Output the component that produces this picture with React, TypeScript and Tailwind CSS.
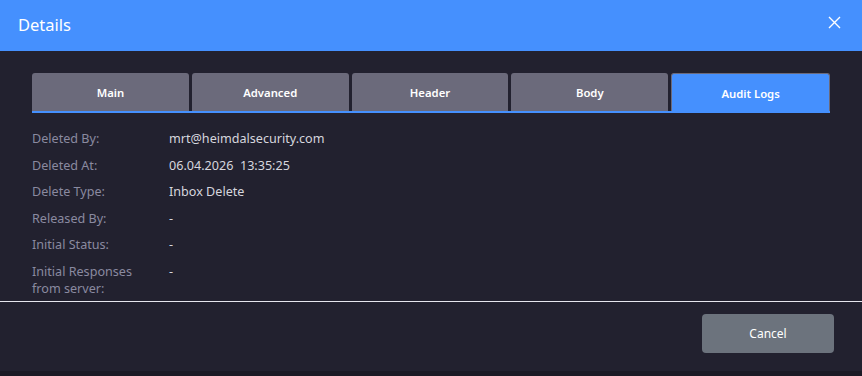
import React from "react";

const tabs = ["Main", "Advanced", "Header", "Body", "Audit Logs"];
const rows: [string, string][] = [
  ["Deleted By:", "mrt@heimdalsecurity.com"],
  ["Deleted At:", "06.04.2026\u00a0\u00a013:35:25"],
  ["Delete Type:", "Inbox Delete"],
  ["Released By:", "-"],
  ["Initial Status:", "-"],
  ["Initial Responses from server:", "-"],
];

export default function App() {
  return (
    <div
      className="w-[862px] h-[376px] bg-[#1b1a25] overflow-hidden"
      style={{ fontFamily: '"Noto Sans", "Open Sans", sans-serif' }}
    >
      <div className="h-[371px] bg-[#22212f] flex flex-col">
        <div className="h-[51px] bg-[#4590fe] flex items-center justify-between pl-[18px] pr-[21px] shrink-0">
          <span className="text-white text-[16.5px] leading-none font-normal">Details</span>
          <svg width="13" height="13" viewBox="0 0 13 13" className="mt-[-6px]">
            <path d="M1 1L12 12M12 1L1 12" stroke="white" strokeWidth="1.4" />
          </svg>
        </div>
        <div className="px-[32px] pt-[22px] flex-1">
          <div className="flex gap-[3px] w-[798px] border-b-2 border-[#4590fe]">
            {tabs.map((t, i) => (
              <div
                key={t}
                className={
                  i === 4
                    ? "flex-1 h-[38px] pt-[3px] rounded-t-[3px] bg-[#4590fe] border border-b-0 border-[#6b6a7b] flex items-center justify-center text-white text-[11.3px] font-semibold"
                    : "flex-1 h-[38px] pt-[3px] rounded-t-[3px] bg-[#6b6a7b] flex items-center justify-center text-white text-[11.3px] font-semibold"
                }
              >
                {t}
              </div>
            ))}
          </div>
          <div className="grid grid-cols-[137px_1fr] gap-y-[9.6px] pt-[17px] text-[12.6px] leading-[17px]">
            {rows.map(([l, v]) => (
              <React.Fragment key={l}>
                <div className="text-[#8a8aa0] pr-[12px]">{l}</div>
                <div className="text-[#d6d6de]">{v}</div>
              </React.Fragment>
            ))}
          </div>
        </div>
        <div className="h-px bg-[#e6e6ee] shrink-0" />
        <div className="h-[69px] flex items-start justify-end pr-[28px] pt-[12px] shrink-0">
          <button className="w-[132px] h-[39px] rounded-[4px] bg-[#6c737d] text-white text-[12px]">
            Cancel
          </button>
        </div>
      </div>
    </div>
  );
}
